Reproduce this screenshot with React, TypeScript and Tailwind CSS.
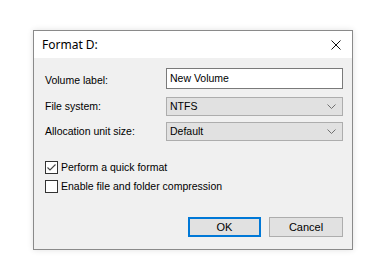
import React from "react";

const Chevron = () => (
  <svg width="9" height="5" viewBox="0 0 9 5" className="shrink-0">
    <path d="M0.5 0.5 L4.5 4.5 L8.5 0.5" fill="none" stroke="#707070" strokeWidth="1" />
  </svg>
);

const Select = ({ value }: { value: string }) => (
  <div className="flex h-[19px] w-[177px] items-center justify-between border border-[#adadad] bg-[#e1e1e1] pl-[3px] pr-[6px]">
    <span>{value}</span>
    <Chevron />
  </div>
);

const Checkbox = ({ checked, label }: { checked?: boolean; label: string }) => (
  <div className="flex h-[13px] items-center gap-[3px]">
    <div className="flex h-[13px] w-[13px] items-center justify-center border border-[#333] bg-white">
      {checked && (
        <svg width="11" height="11" viewBox="0 0 11 11">
          <path d="M1.5 5.5 L4 8 L9.5 2.5" fill="none" stroke="#444" strokeWidth="1.1" />
        </svg>
      )}
    </div>
    <span>{label}</span>
  </div>
);

const App = () => {
  return (
    <div className="h-[267px] w-[376px] bg-white pl-[33px] pt-[30px] text-[10.5px] leading-[13px] text-black" style={{ fontFamily: '"Liberation Sans", Arial, sans-serif' }}>
      <div className="flex h-[220px] w-[320px] flex-col border border-[#8a8a8a] bg-[#f0f0f0] shadow-[0_0_6px_rgba(0,0,0,0.12)]">
        <div className="flex h-[27px] shrink-0 items-center justify-between bg-white pl-[8px] pr-[11px]">
          <span className="text-[12px] leading-[16px]" style={{ fontFamily: '"Noto Sans", "Open Sans", sans-serif' }}>
            Format D:
          </span>
          <svg width="10" height="10" viewBox="0 0 10 10">
            <path d="M0.5 0.5 L9.5 9.5 M9.5 0.5 L0.5 9.5" stroke="#111" strokeWidth="1" />
          </svg>
        </div>

        <div className="flex flex-col pl-[11px] pr-[9px] pt-[10px]">
          <div className="flex items-center justify-between">
            <span className="pt-[3px]">Volume label:</span>
            <div className="flex h-[21px] w-[177px] items-center border border-[#7a7a7a] bg-white pl-[3px] pb-[1px]">
              New Volume
            </div>
          </div>
          <div className="mt-[8px] flex items-center justify-between">
            <span>File system:</span>
            <Select value="NTFS" />
          </div>
          <div className="mt-[6px] flex items-center justify-between">
            <span>Allocation unit size:</span>
            <Select value="Default" />
          </div>

          <div className="mt-[20px] flex flex-col gap-[6px]">
            <Checkbox checked label="Perform a quick format" />
            <Checkbox label="Enable file and folder compression" />
          </div>

          <div className="mt-[24px] flex justify-end gap-[8px]">
            <button className="h-[20px] w-[73px] border-2 border-[#0078d7] bg-[#e1e1e1] text-[11px]">
              OK
            </button>
            <button className="h-[20px] w-[74px] border border-[#adadad] bg-[#e1e1e1] text-[11px]">
              Cancel
            </button>
          </div>
        </div>
      </div>
    </div>
  );
};

export default App;
